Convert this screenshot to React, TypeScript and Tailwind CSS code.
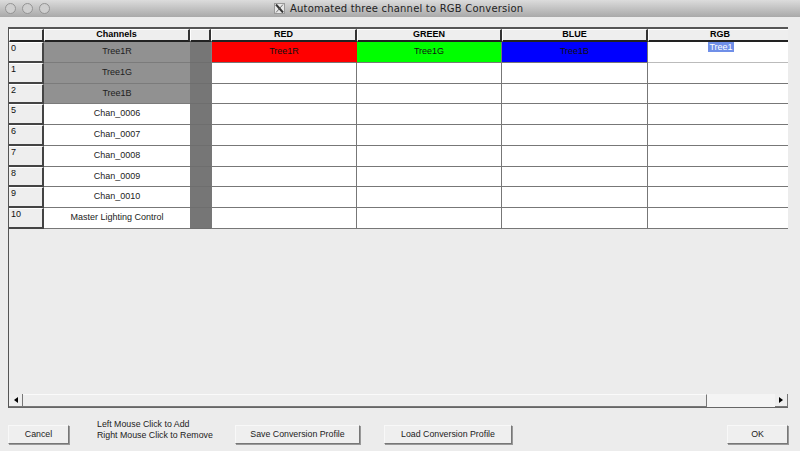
const rows = [
  { id: "0", name: "Tree1R", used: true },
  { id: "1", name: "Tree1G", used: true },
  { id: "2", name: "Tree1B", used: true },
  { id: "5", name: "Chan_0006" },
  { id: "6", name: "Chan_0007" },
  { id: "7", name: "Chan_0008" },
  { id: "8", name: "Chan_0009" },
  { id: "9", name: "Chan_0010" },
  { id: "10", name: "Master Lighting Control" },
];

function HeaderCell({ label, last }: { label?: string; last?: boolean }) {
  return (
    <div
      className={`flex items-center justify-center bg-[#eeeeee] border-t border-l border-t-white border-l-white border-b-2 border-b-[#222222] text-[9px] font-bold text-black ${
        last ? "pl-[3px]" : "border-r-2 border-r-[#333333]"
      }`}
    >
      {label}
    </div>
  );
}

function Button({ label, className }: { label: string; className: string }) {
  return (
    <button
      className={`h-[19px] flex items-center justify-center bg-[#efefef] border border-t-[#f8f8f8] border-l-[#f8f8f8] border-r-[#777777] border-b-[#777777] shadow-[1px_1px_0_#999999] text-[8.8px] text-[#222222] ${className}`}
    >
      {label}
    </button>
  );
}

export default function App() {
  return (
    <div className="w-[800px] h-[451px] overflow-hidden bg-[#ececec] flex flex-col font-['Liberation_Sans',sans-serif]">
      <div className="h-[17px] shrink-0 flex items-center relative bg-gradient-to-b from-[#dcdcdc] to-[#a9a9a9]">
        <div className="absolute left-[5px] top-[3px] flex gap-[6px]">
          <span className="w-[11px] h-[11px] rounded-full bg-[#cfcfcf] border border-[#949494]" />
          <span className="w-[11px] h-[11px] rounded-full bg-[#cfcfcf] border border-[#949494]" />
          <span className="w-[11px] h-[11px] rounded-full bg-[#cfcfcf] border border-[#949494]" />
        </div>
        <div className="ml-[274px] flex items-center gap-[5px]">
          <span className="w-[11px] h-[11px] bg-[#e8e8e8] border border-[#999999] flex items-center justify-center">
            <svg width="9" height="9" viewBox="0 0 9 9">
              <path d="M1 0.5 L8 8.5" stroke="#333333" strokeWidth="2" />
              <path d="M8 0.5 L1 8.5" stroke="#555555" strokeWidth="0.8" />
            </svg>
          </span>
          <span className="text-[10px] tracking-[0.2px] text-[#222222] whitespace-nowrap font-['DejaVu_Sans',sans-serif]">
            Automated three channel to RGB Conversion
          </span>
        </div>
      </div>

      <div className="mt-[10px] ml-[8px] w-[780px] h-[381px] shrink-0 flex flex-col border-l border-t-2 border-l-[#555555] border-t-[#555555] border-b border-b-[#666666] bg-[#ececec]">
        <div className="grid grid-cols-[35px_146px_21px_146px_145px_146px_140px] grid-rows-[13px_repeat(9,20.75px)]">
          <HeaderCell />
          <HeaderCell label="Channels" />
          <HeaderCell />
          <HeaderCell label="RED" />
          <HeaderCell label="GREEN" />
          <HeaderCell label="BLUE" />
          <HeaderCell label="RGB" last />
          {rows.map((row, i) => (
            <div key={row.id} className="contents">
              <div className="bg-[#eeeeee] border-t border-t-white border-r-2 border-b-2 border-r-[#444444] border-b-[#444444] pl-[2px] text-[9px] leading-[11px] text-[#111111]">
                {row.id}
              </div>
              <div
                className={`flex items-center justify-center text-[9px] border-b ${
                  row.used
                    ? "bg-[#919191] border-b-[#7b7b7b] text-[#222222]"
                    : "bg-white border-b-[#777777] text-[#222222]"
                }`}
              >
                {row.name}
              </div>
              <div className="bg-[#767676] border-b border-b-[#6e6e6e]" />
              <div
                className={`flex items-center justify-center text-[9px] text-[#111111] border-l border-r border-b border-l-[#777777] border-r-[#777777] border-b-[#777777] ${
                  i === 0 ? "bg-[#ff0000] border-l-[#808080] border-r-[#ff0000]" : "bg-white"
                }`}
              >
                {i === 0 && "Tree1R"}
              </div>
              <div
                className={`flex items-center justify-center text-[9px] text-[#111111] border-r border-b border-r-[#777777] border-b-[#777777] ${
                  i === 0 ? "bg-[#00ff00]" : "bg-white"
                }`}
              >
                {i === 0 && "Tree1G"}
              </div>
              <div
                className={`flex items-center justify-center text-[9px] text-[#111111] border-r border-b border-r-[#777777] border-b-[#777777] ${
                  i === 0 ? "bg-[#0000ff]" : "bg-white"
                }`}
              >
                {i === 0 && "Tree1B"}
              </div>
              <div className={`flex justify-center pl-[6px] bg-white border-b ${i === 0 ? "border-b-[#bbbbbb]" : "border-b-[#777777]"}`}>
                {i === 0 && (
                  <span className="h-[10px] px-[1px] bg-[#6f8fe8] text-white text-[9px] leading-[10px]">Tree1</span>
                )}
              </div>
            </div>
          ))}
        </div>

        <div className="mt-auto h-[13px] flex bg-[#f2f2f2]">
          <div className="w-[14px] flex items-center justify-center bg-[#eeeeee] border-r border-b border-r-[#777777] border-b-[#777777]">
            <span className="w-0 h-0 border-y-[3px] border-y-transparent border-r-[4px] border-r-black" />
          </div>
          <div className="w-[684px] bg-[#eeeeee] border-t border-t-[#fafafa] border-r border-b border-r-[#777777] border-b-[#777777]" />
          <div className="flex-1 bg-[#f4f4f4]" />
          <div className="w-[13px] flex items-center justify-center bg-[#eeeeee] border-r border-b border-r-[#777777] border-b-[#777777]">
            <span className="w-0 h-0 border-y-[3px] border-y-transparent border-l-[4px] border-l-black" />
          </div>
        </div>
      </div>

      <div className="mt-[11px] ml-[8px] w-[780px] relative flex items-end">
        <Button label="Cancel" className="w-[61px]" />
        <div className="ml-[28px] w-[138px] text-[8.8px] leading-[11px] text-[#222222] mb-[3px]">
          <div>Left Mouse Click to Add</div>
          <div>Right Mouse Click to Remove</div>
        </div>
        <Button label="Save Conversion Profile" className="w-[125px]" />
        <Button label="Load Conversion Profile" className="w-[128px] ml-[24px]" />
        <Button label="OK" className="w-[61px] ml-auto" />
      </div>
    </div>
  );
}
